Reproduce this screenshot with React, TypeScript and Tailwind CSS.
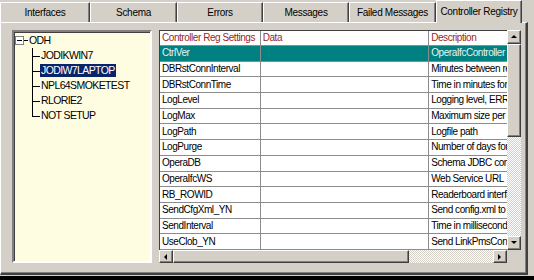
import React from "react";

const tabs = [
  { label: "Interfaces", cls: "w-[90px]" },
  { label: "Schema", cls: "w-[87px]" },
  { label: "Errors", cls: "w-[86px]" },
  { label: "Messages", cls: "w-[86px]" },
  { label: "Failed Messages", cls: "w-[87px]" },
];

const nodes = ["JODIKWIN7", "JODIW7LAPTOP", "NPL64SMOKETEST", "RLORIE2", "NOT SETUP"];

const rows: [string, string, string][] = [
  ["CtrlVer", "", "OperaIfcController"],
  ["DBRstConnInterval", "", "Minutes between reconnects"],
  ["DBRstConnTime", "", "Time in minutes for reconnect"],
  ["LogLevel", "", "Logging level, ERROR"],
  ["LogMax", "", "Maximum size per log"],
  ["LogPath", "", "Logfile path"],
  ["LogPurge", "", "Number of days for purge"],
  ["OperaDB", "", "Schema JDBC connection"],
  ["OperaIfcWS", "", "Web Service URL"],
  ["RB_ROWID", "", "Readerboard interface"],
  ["SendCfgXml_YN", "", "Send config.xml to client"],
  ["SendInterval", "", "Time in milliseconds"],
  ["UseClob_YN", "", "Send LinkPmsConfig"],
];

function Arrow({ dir }: { dir: "up" | "down" | "left" | "right" }) {
  const pts = {
    up: "1,5 4,2 7,5",
    down: "1,2 4,5 7,2",
    left: "5,1 2,4 5,7",
    right: "2,1 5,4 2,7",
  }[dir];
  return (
    <svg width="8" height="8" viewBox="0 0 8 8">
      <polygon points={pts} fill="#000" />
    </svg>
  );
}

function Btn({ dir, cls }: { dir: "up" | "down" | "left" | "right"; cls: string }) {
  return (
    <div
      className={`${cls} shrink-0 flex items-center justify-center bg-[#d4d0c8] border-t border-l border-[#ffffff] border-r border-b border-r-[#404040] border-b-[#404040] shadow-[inset_-1px_-1px_0_#808080]`}
    >
      <Arrow dir={dir} />
    </div>
  );
}

const track =
  "bg-[image:repeating-conic-gradient(#d4d0c8_0%_25%,#ffffff_0%_50%)] bg-size-[2px_2px]";

export default function App() {
  return (
    <div
      className="w-[534px] h-[280px] overflow-hidden bg-[#d4d0c8] text-[10px] text-black"
      style={{ fontFamily: '"Liberation Sans", Arial, sans-serif' }}
    >
      {/* Tabs */}
      <div className="flex h-[22px] items-start tracking-[-0.3px]">
        {tabs.map((t) => (
          <div
            key={t.label}
            className={`${t.cls} mt-[2px] h-[20px] flex items-center justify-center whitespace-nowrap border-t border-l border-white border-r border-r-[#404040] shadow-[inset_-1px_0_0_#808080]`}
          >
            {t.label}
          </div>
        ))}
        <div className="w-[86px] h-[23px] relative z-10 flex items-center justify-center whitespace-nowrap bg-[#d4d0c8] border-t border-l border-white border-r border-r-[#404040] shadow-[inset_-1px_0_0_#808080] pb-[2px]">
          Controller Registry
        </div>
      </div>

      {/* Panel */}
      <div className="w-[528px] h-[253px] border-t border-l border-white border-r-2 border-b-2 border-r-[#404040] border-b-[#404040] shadow-[inset_-1px_-1px_0_#808080] flex pt-[7px] pl-[11px]">
        {/* Tree */}
        <div className="w-[140px] h-[233px] bg-[#fefde2] border-2 border-t-[#808080] border-l-[#808080] border-r-white border-b-white shadow-[inset_1px_1px_0_#404040] pt-[1px] tracking-[-0.6px] text-[10.5px]">
          <div className="flex items-center h-[15px] pl-[1px]">
            <div className="w-[9px] h-[9px] border border-[#808080] bg-white flex items-center justify-center">
              <div className="w-[5px] h-px bg-black" />
            </div>
            <div className="w-[4px] h-px bg-black" />
            <span className="ml-px">ODH</span>
          </div>
          {nodes.map((n, i) => (
            <div key={n} className="flex items-stretch h-[15px] pl-[18px]">
              <div className="relative w-[8px]">
                <div
                  className={`absolute left-0 top-0 border-l border-black ${
                    i === nodes.length - 1 ? "h-1/2" : "h-full"
                  }`}
                />
                <div className="absolute left-0 top-1/2 w-full border-t border-black" />
              </div>
              <div className="flex items-center">
                <span
                  className={
                    n === "JODIW7LAPTOP"
                      ? "bg-[#0a246a] text-white px-px leading-[13px]"
                      : "px-px"
                  }
                >
                  {n}
                </span>
              </div>
            </div>
          ))}
        </div>

        {/* Table area */}
        <div className="ml-[7px] w-[362px] h-[233px] flex flex-col">
          <div className="flex h-[220px]">
            <div className="w-[348px] h-full flex flex-col bg-white border-l border-t border-[#404040] overflow-hidden leading-[12px] tracking-[-0.45px]">
              <div className="flex h-[15px] shrink-0 text-[#992626]">
                <div className="w-[101px] border-r border-b border-[#8c8c8c] px-[2px] flex items-center whitespace-nowrap overflow-hidden">
                  Controller Reg Settings
                </div>
                <div className="w-[169px] border-r border-b border-[#8c8c8c] px-[2px] flex items-center">
                  Data
                </div>
                <div className="w-[78px] border-b border-[#8c8c8c] px-[2px] flex items-center">
                  Description
                </div>
              </div>
              {rows.map(([a, b, c], i) => (
                <div
                  key={a}
                  className={`flex flex-1 min-h-0 ${i === 0 ? "bg-[#008080] text-[#e6f4f4]" : ""}`}
                >
                  <div className="w-[101px] border-r border-b border-[#8c8c8c] px-[2px] flex items-center whitespace-nowrap overflow-hidden">
                    {a}
                  </div>
                  <div className="w-[169px] border-r border-b border-[#8c8c8c] px-[2px] flex items-center">
                    {b}
                  </div>
                  <div className="w-[78px] border-b border-[#8c8c8c] px-[2px] flex items-center whitespace-nowrap overflow-hidden">
                    {c}
                  </div>
                </div>
              ))}
            </div>
            {/* Vertical scrollbar */}
            <div className="w-[14px] h-full flex flex-col">
              <Btn dir="up" cls="h-[14px] w-[14px]" />
              <div className="h-[93px] w-[14px] shrink-0 bg-[#d4d0c8] border-t border-l border-white border-r border-b border-r-[#404040] border-b-[#404040] shadow-[inset_-1px_-1px_0_#808080]" />
              <div className={`flex-1 ${track}`} />
              <Btn dir="down" cls="h-[14px] w-[14px]" />
            </div>
          </div>
          {/* Horizontal scrollbar */}
          <div className="flex h-[13px]">
            <div className="w-[348px] h-full flex">
              <Btn dir="left" cls="w-[14px] h-[13px]" />
              <div className="w-[236px] h-[13px] shrink-0 bg-[#d4d0c8] border-t border-l border-white border-r border-b border-r-[#404040] border-b-[#404040] shadow-[inset_-1px_-1px_0_#808080]" />
              <div className={`flex-1 ${track}`} />
              <Btn dir="right" cls="w-[14px] h-[13px]" />
            </div>
            <div className="w-[14px] h-full bg-[#d4d0c8]" />
          </div>
        </div>
      </div>
      <div className="h-px w-[528px] bg-[#d4d0c8]" />
      <div className="h-[4px] w-full bg-black" />
    </div>
  );
}
